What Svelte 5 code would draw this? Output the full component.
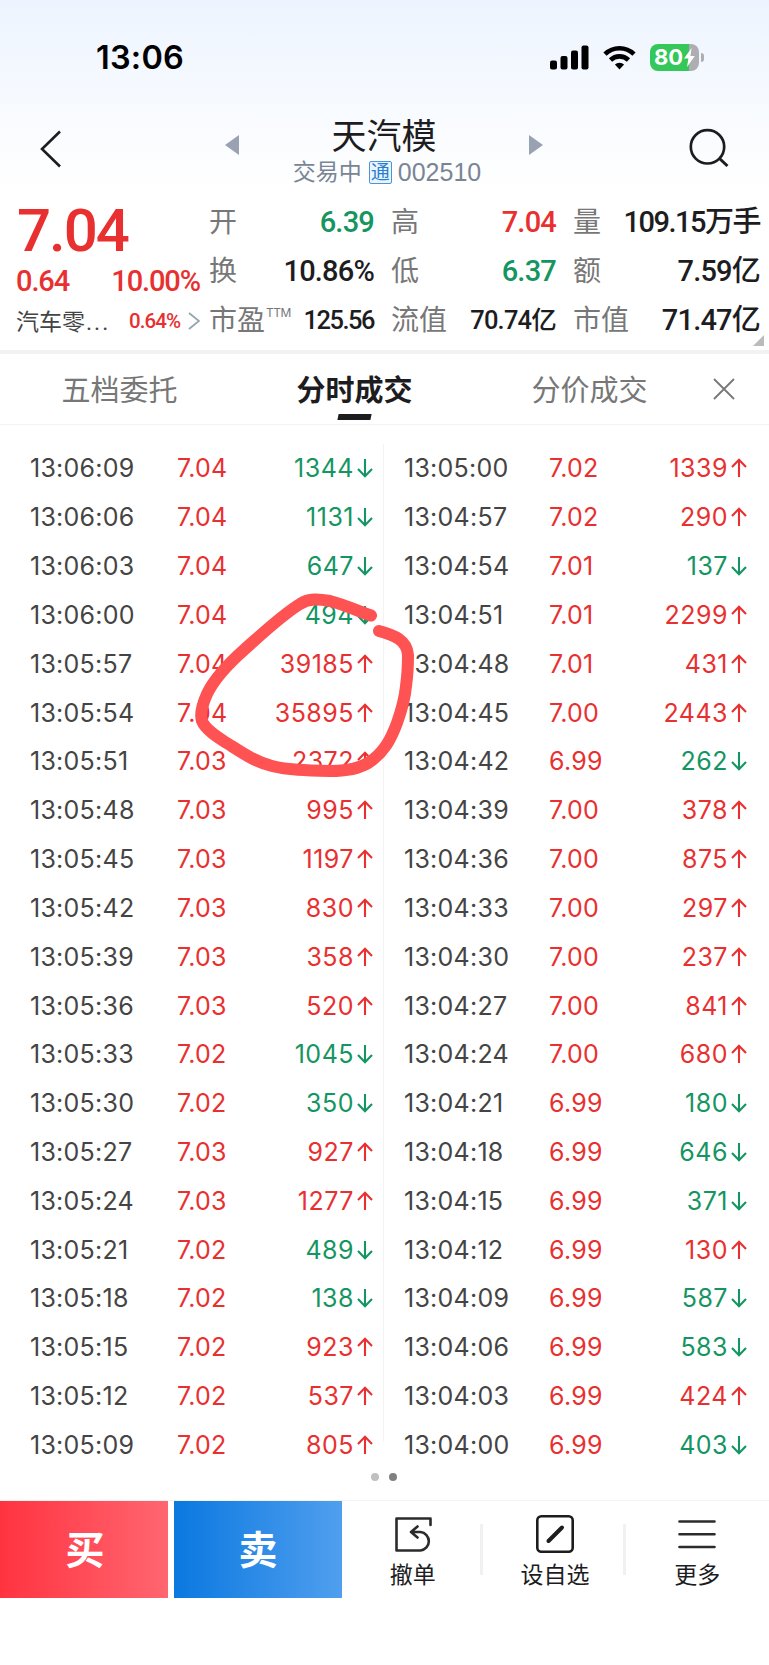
<script lang="ts">
	type Dir = 'up' | 'down'
	type Trade = { time: string; price: string; volume: number; dir: Dir }
	type Stat = { label: string; sup?: string; value: string; tone?: string; small?: boolean; tight?: boolean }

	const stats: Stat[] = [
		{ label: '开', value: '6.39', tone: 'down' },
		{ label: '高', value: '7.04', tone: 'up' },
		{ label: '量', value: '109.15万手', tight: true },
		{ label: '换', value: '10.86%' },
		{ label: '低', value: '6.37', tone: 'down' },
		{ label: '额', value: '7.59亿' },
		{ label: '市盈', sup: 'TTM', value: '125.56', small: true, tight: true },
		{ label: '流值', value: '70.74亿', small: true },
		{ label: '市值', value: '71.47亿' }
	]

	const tabs = ['五档委托', '分时成交', '分价成交']
	let active = $state(1)

	// time, price, signed volume
	const left = parse(`
		13:06:09 7.04 -1344
		13:06:06 7.04 -1131
		13:06:03 7.04 -647
		13:06:00 7.04 -494
		13:05:57 7.04 39185
		13:05:54 7.04 35895
		13:05:51 7.03 2372
		13:05:48 7.03 995
		13:05:45 7.03 1197
		13:05:42 7.03 830
		13:05:39 7.03 358
		13:05:36 7.03 520
		13:05:33 7.02 -1045
		13:05:30 7.02 -350
		13:05:27 7.03 927
		13:05:24 7.03 1277
		13:05:21 7.02 -489
		13:05:18 7.02 -138
		13:05:15 7.02 923
		13:05:12 7.02 537
		13:05:09 7.02 805`)

	const right = parse(`
		13:05:00 7.02 1339
		13:04:57 7.02 290
		13:04:54 7.01 -137
		13:04:51 7.01 2299
		13:04:48 7.01 431
		13:04:45 7.00 2443
		13:04:42 6.99 -262
		13:04:39 7.00 378
		13:04:36 7.00 875
		13:04:33 7.00 297
		13:04:30 7.00 237
		13:04:27 7.00 841
		13:04:24 7.00 680
		13:04:21 6.99 -180
		13:04:18 6.99 -646
		13:04:15 6.99 -371
		13:04:12 6.99 130
		13:04:09 6.99 -587
		13:04:06 6.99 -583
		13:04:03 6.99 424
		13:04:00 6.99 -403`)

	function parse(text: string): Trade[] {
		return text.trim().split('\n').map((line) => {
			const [time, price, vol] = line.trim().split(' ')
			const n = Number(vol)
			return { time, price, volume: Math.abs(n), dir: n < 0 ? 'down' : 'up' }
		})
	}
</script>

<div class="screen">
	<div class="status">
		<span class="clock">13:06</span>
		<div class="status-icons">
			<svg width="39" height="25" viewBox="0 0 39 25">
				<rect x="0" y="15.5" width="7" height="9" rx="2" />
				<rect x="10.5" y="11" width="7" height="13.5" rx="2" />
				<rect x="21" y="5.5" width="7" height="19" rx="2" />
				<rect x="31.5" y="0.5" width="7" height="24" rx="2" />
			</svg>
			<svg width="33" height="25" viewBox="0 0 33 25" fill="none" stroke="#000" stroke-width="4.6">
				<path d="M2 9.2a20.8 20.8 0 0 1 29 0" />
				<path d="M7.5 15a13 13 0 0 1 18 0" />
				<path d="M16.5 24.5l-4.6-5a6.6 6.6 0 0 1 9.2 0z" fill="#000" stroke="none" />
			</svg>
			<div class="battery">
				<div class="cell">
					<span>80</span>
					<svg width="11" height="19" viewBox="0 0 11 19"><path d="M7.6 0L0 10.6h4.4L3 19l7.8-11H6.4z" fill="#fff" /></svg>
				</div>
				<i></i>
			</div>
		</div>
	</div>

	<header>
		<svg class="back" width="24" height="40" viewBox="0 0 24 40" fill="none" stroke="#1d1d1f" stroke-width="2.6">
			<path d="M21 2.5L3 20l18 17.5" />
		</svg>
		<svg class="prev" width="14" height="20" viewBox="0 0 14 20"><path d="M14 0v20L0 10z" fill="#98a2b0" /></svg>
		<div class="title">
			<h1>天汽模</h1>
			<p>交易中<b>通</b><span>002510</span></p>
		</div>
		<svg class="next" width="14" height="20" viewBox="0 0 14 20"><path d="M0 0v20l14-10z" fill="#98a2b0" /></svg>
		<svg class="search" width="42" height="40" viewBox="0 0 42 40" fill="none" stroke="#1d1d1f" stroke-width="2.7">
			<circle cx="18.5" cy="18.8" r="16.7" />
			<path d="M30.5 30.5l8 7.5" stroke-width="3" />
		</svg>
	</header>

	<section class="quote">
		<div class="main-price up">
			<div class="price">7.04</div>
			<div class="change"><span>0.64</span><span>10.00%</span></div>
			<div class="sector">
				<span class="name">汽车零<span>...</span></span>
				<span class="pct">0.64%</span>
				<svg width="12" height="18" viewBox="0 0 12 18" fill="none" stroke="#98a2b0" stroke-width="1.8"><path d="M1 1l10 8-10 8" /></svg>
			</div>
		</div>
		<div class="stats">
			{#each stats as s}
				<div class="stat">
					<span class="label">{s.label}{#if s.sup}<sup>{s.sup}</sup>{/if}</span>
					<span class={['value', s.tone, s.small && 'small', s.tight && 'tight']}>{s.value}</span>
				</div>
			{/each}
		</div>
		<svg class="corner" width="11" height="11" viewBox="0 0 11 11"><path d="M11 0v11H0z" fill="#bbb" /></svg>
	</section>

	<nav>
		{#each tabs as tab, i}
			<button class={['tab', active === i && 'active']} onclick={() => (active = i)}>{tab}</button>
		{/each}
		<svg width="24" height="24" viewBox="0 0 24 24" fill="none" stroke="#777" stroke-width="1.8"><path d="M2 2l20 20M22 2L2 22" /></svg>
	</nav>

	<section class="trades">
		{#each [left, right] as column}
			<div class="column">
				{#each column as t}
					<div class="trade">
						<span class="time">{t.time}</span>
						<span class="deal up">{t.price}</span>
						<span class={['volume', t.dir]}>{t.volume}
							<svg width="16" height="20" viewBox="0 0 16 20" fill="none" stroke="currentColor" stroke-width="2.1">
								{#if t.dir === 'up'}
									<path d="M8 19V2M1 9l7-7.200L15 9" />
								{:else}
									<path d="M8 1v17M1 11l7 7.200 7-7.200" />
								{/if}
							</svg></span>
					</div>
				{/each}
			</div>
		{/each}
		<svg class="scribble" width="222" height="190" viewBox="194 590 222 190" fill="none" stroke="#ff5252" stroke-width="12" stroke-linecap="round" stroke-linejoin="round">
			<path d="M371 615.500C356 610 342 604 330 601C319 599 309 598 300 604C282 615 263 633 245 649C228 664 214 679 207 694C202 705 200 715 202 721C205 729 217 737 230 745C244 754 256 762 272 766C288 770 306 770.500 330 771C347 771 358 769 368 763C384 753 391 739 397 723C403 706 405 698 406 686C408 672 408 664 408 655C407 640 394 635 379 631" />
		</svg>
	</section>

	<div class="dots"><i></i><i class="on"></i></div>

	<footer>
		<button class="buy">买</button>
		<button class="sell">卖</button>
		<div class="action">
			<svg width="38" height="38" viewBox="0 0 38 38" fill="none" stroke="#2b2b2d" stroke-width="2.6" stroke-linecap="round" stroke-linejoin="round">
				<path d="M36.500 10V3.500H2.500v32h24a9.300 9.300 0 0 0 0-18.500H17M23.500 11.500l-6.500 5.500 6.500 5.500" />
			</svg>
			<span>撤单</span>
		</div>
		<div class="action">
			<svg width="38" height="38" viewBox="0 0 38 38" fill="none" stroke="#1d1d1f" stroke-width="2.6" stroke-linecap="round">
				<rect x="1.300" y="1.300" width="35.400" height="35.400" rx="4" />
				<path d="M12.500 26L26 12.500" stroke-width="4" />
			</svg>
			<span>设自选</span>
		</div>
		<div class="action">
			<svg width="38" height="38" viewBox="0 0 38 38" fill="none" stroke="#2b2b2d" stroke-width="2.6" stroke-linecap="round">
				<path d="M1.500 6.500h35M1.500 19.200h35M1.500 32h35" />
			</svg>
			<span>更多</span>
		</div>
	</footer>
</div>

<style>
	:global(body) {
		background: #fff;
	}

	.screen {
		width: 769px;
		height: 1665px;
		overflow: hidden;
		background: linear-gradient(#edf4ff, #fff 190px);
		font-family: Inter, 'Noto Sans CJK SC', sans-serif;
		color: #1d1d1f;
	}

	svg {
		display: block;
		flex: none;
	}

	.up {
		color: #e93030;
	}

	.down {
		color: #149562;
	}

	.status {
		display: flex;
		justify-content: space-between;
		align-items: center;
		height: 114px;
		padding: 0 65px 0 96px;
		color: #000;
	}

	.clock {
		padding-top: 1px;
		font-size: 32.500px;
		font-weight: 600;
		letter-spacing: 0.200px;
	}

	.status-icons {
		display: flex;
		align-items: center;
		gap: 14px;
	}

	.battery {
		display: flex;
		align-items: center;
		gap: 2px;
	}

	.battery .cell {
		display: flex;
		align-items: center;
		gap: 1px;
		width: 49px;
		height: 27px;
		box-sizing: border-box;
		padding-left: 4px;
		border-radius: 8px;
		background: linear-gradient(90deg, #34c759 39px, #aeaeb2 39px);
		color: #fff;
		font-size: 22px;
		font-weight: 700;
		line-height: 27px;
	}

	.battery i {
		width: 3px;
		height: 9px;
		border-radius: 0 3px 3px 0;
		background: #aeaeb2;
	}

	header {
		display: flex;
		height: 82px;
	}

	.back {
		margin: 15px 0 0 39px;
	}

	.prev {
		margin: 21px 0 0 162px;
	}

	.title {
		width: 290px;
		text-align: center;
	}

	h1 {
		margin: 0;
		font-size: 35px;
		font-weight: 400;
		line-height: 44px;
	}

	.title p {
		display: flex;
		justify-content: center;
		align-items: center;
		margin: 1px 0 0;
		padding-left: 6px;
		font-size: 23px;
		line-height: 26px;
		color: #7a8594;
	}

	.title b {
		margin: 0 6px 0 7px;
		width: 21px;
		height: 21px;
		border: 1px solid #4a94d8;
		border-radius: 2px;
		background: #eaf4ff;
		color: #2680cf;
		font-size: 19px;
		font-weight: 400;
		line-height: 21px;
		text-align: center;
	}

	.title p span {
		font-family: 'Liberation Sans', sans-serif;
		font-size: 25px;
	}

	.next {
		margin: 21px 0 0;
	}

	.search {
		margin: 14px 0 0 146px;
	}

	.quote {
		position: relative;
		display: flex;
		height: 154px;
		border-bottom: 4px solid #f2f2f2;
		font-family: Roboto, 'Noto Sans CJK SC', sans-serif;
		font-weight: 500;
	}

	.main-price {
		width: 184px;
		padding: 4px 0 0 16px;
	}

	.price {
		height: 61px;
		padding-left: 1px;
		font-size: 60px;
		line-height: 62px;
		letter-spacing: -2px;
	}

	.change {
		display: flex;
		justify-content: space-between;
		height: 40px;
		font-size: 29px;
		line-height: 40px;
		letter-spacing: -1.100px;
	}

	.sector {
		display: flex;
		align-items: center;
		height: 40px;
	}

	.name {
		width: 113px;
		margin-top: -3px;
		font-size: 23px;
		font-weight: 400;
		color: #444;
		white-space: nowrap;
	}

	.name span {
		margin-left: 1px;
		letter-spacing: 2px;
	}

	.pct {
		width: 51px;
		margin-right: 8px;
		font-size: 20.500px;
		letter-spacing: -0.900px;
	}

	.stats {
		display: grid;
		grid-template-columns: 165px 165px 187px;
		grid-auto-rows: 49px;
		column-gap: 17px;
		padding: 2px 0 0 9px;
	}

	.stat {
		display: flex;
		justify-content: space-between;
		align-items: center;
		line-height: 49px;
		white-space: nowrap;
	}

	.label {
		font-size: 28px;
		font-weight: 400;
		color: #777;
	}

	sup {
		display: inline-block;
		margin-left: 1px;
		font-family: Inter, sans-serif;
		font-size: 12px;
		line-height: 1;
		letter-spacing: -0.500px;
		vertical-align: 13px;
	}

	.value {
		font-size: 29px;
		letter-spacing: -0.800px;
	}

	.value.small {
		font-size: 25.500px;
	}

	.value.tight {
		letter-spacing: -1.500px;
	}

	.corner {
		position: absolute;
		right: 5px;
		bottom: 4px;
	}

	nav {
		display: flex;
		align-items: center;
		height: 70px;
		border-bottom: 1px solid #f3f3f3;
		padding: 0 32px 0 2px;
	}

	button {
		border: 0;
		padding: 0;
		background: none;
		font: inherit;
	}

	.tab {
		position: relative;
		width: 235px;
		height: 70px;
		padding-bottom: 3px;
		font-size: 29px;
		color: #777;
	}

	.tab.active {
		color: #1d1d1f;
		font-weight: 700;
	}

	.tab.active::after {
		content: '';
		position: absolute;
		left: 101px;
		bottom: 4px;
		width: 33px;
		height: 6px;
		background: #1d1d1f;
		transform: skewX(-12deg);
	}

	nav svg {
		margin-left: 5px;
	}

	.trades {
		position: relative;
		display: flex;
		margin-top: 19px;
		height: 1026px;
	}

	.column {
		width: 384px;
	}

	.column:first-child {
		width: 384px;
		height: 998px;
		box-sizing: border-box;
		border-right: 1px solid #f3f3f3;
	}

	.trade {
		display: grid;
		grid-template-columns: 147px 70px 126px;
		align-items: center;
		height: 48.840px;
		padding-left: 30px;
		font-size: 25px;
		letter-spacing: 0.250px;
	}

	.column + .column .trade {
		grid-template-columns: 145px 71px 127px;
		padding-left: 20px;
	}

	.time {
		color: #444;
	}

	.volume {
		display: flex;
		justify-content: flex-end;
		align-items: center;
		gap: 3px;
		letter-spacing: 0.500px;
	}

	.scribble {
		position: absolute;
		left: 194px;
		top: 146px;
	}

	.dots {
		display: flex;
		justify-content: center;
		align-items: center;
		gap: 10px;
		height: 14px;
		padding-right: 1px;
	}

	.dots i {
		width: 8px;
		height: 8px;
		border-radius: 50%;
		background: #c0c0c0;
	}

	.dots .on {
		background: #808080;
	}

	footer {
		display: flex;
		margin-top: 16px;
		height: 97px;
		border-top: 1px solid #f3f3f3;
	}

	footer button {
		width: 168px;
		height: 97px;
		padding: 0 0 5px 2px;
		color: #fff;
		font-size: 39px;
		font-weight: 700;
	}

	.buy {
		background: linear-gradient(90deg, #ff3340, #ff6670);
	}

	.sell {
		margin-left: 6px;
		padding-left: 0;
		background: linear-gradient(90deg, #0a78e0, #509fee);
	}

	.action {
		display: flex;
		flex: 1;
		flex-direction: column;
		align-items: center;
		padding: 14px 1px 0 0;
		font-size: 23px;
		line-height: 44px;
		background: linear-gradient(#f1f1f1, #f1f1f1) right 1px top 23px / 3px 51px no-repeat;
	}

	.action:last-child {
		background: none;
	}
</style>
